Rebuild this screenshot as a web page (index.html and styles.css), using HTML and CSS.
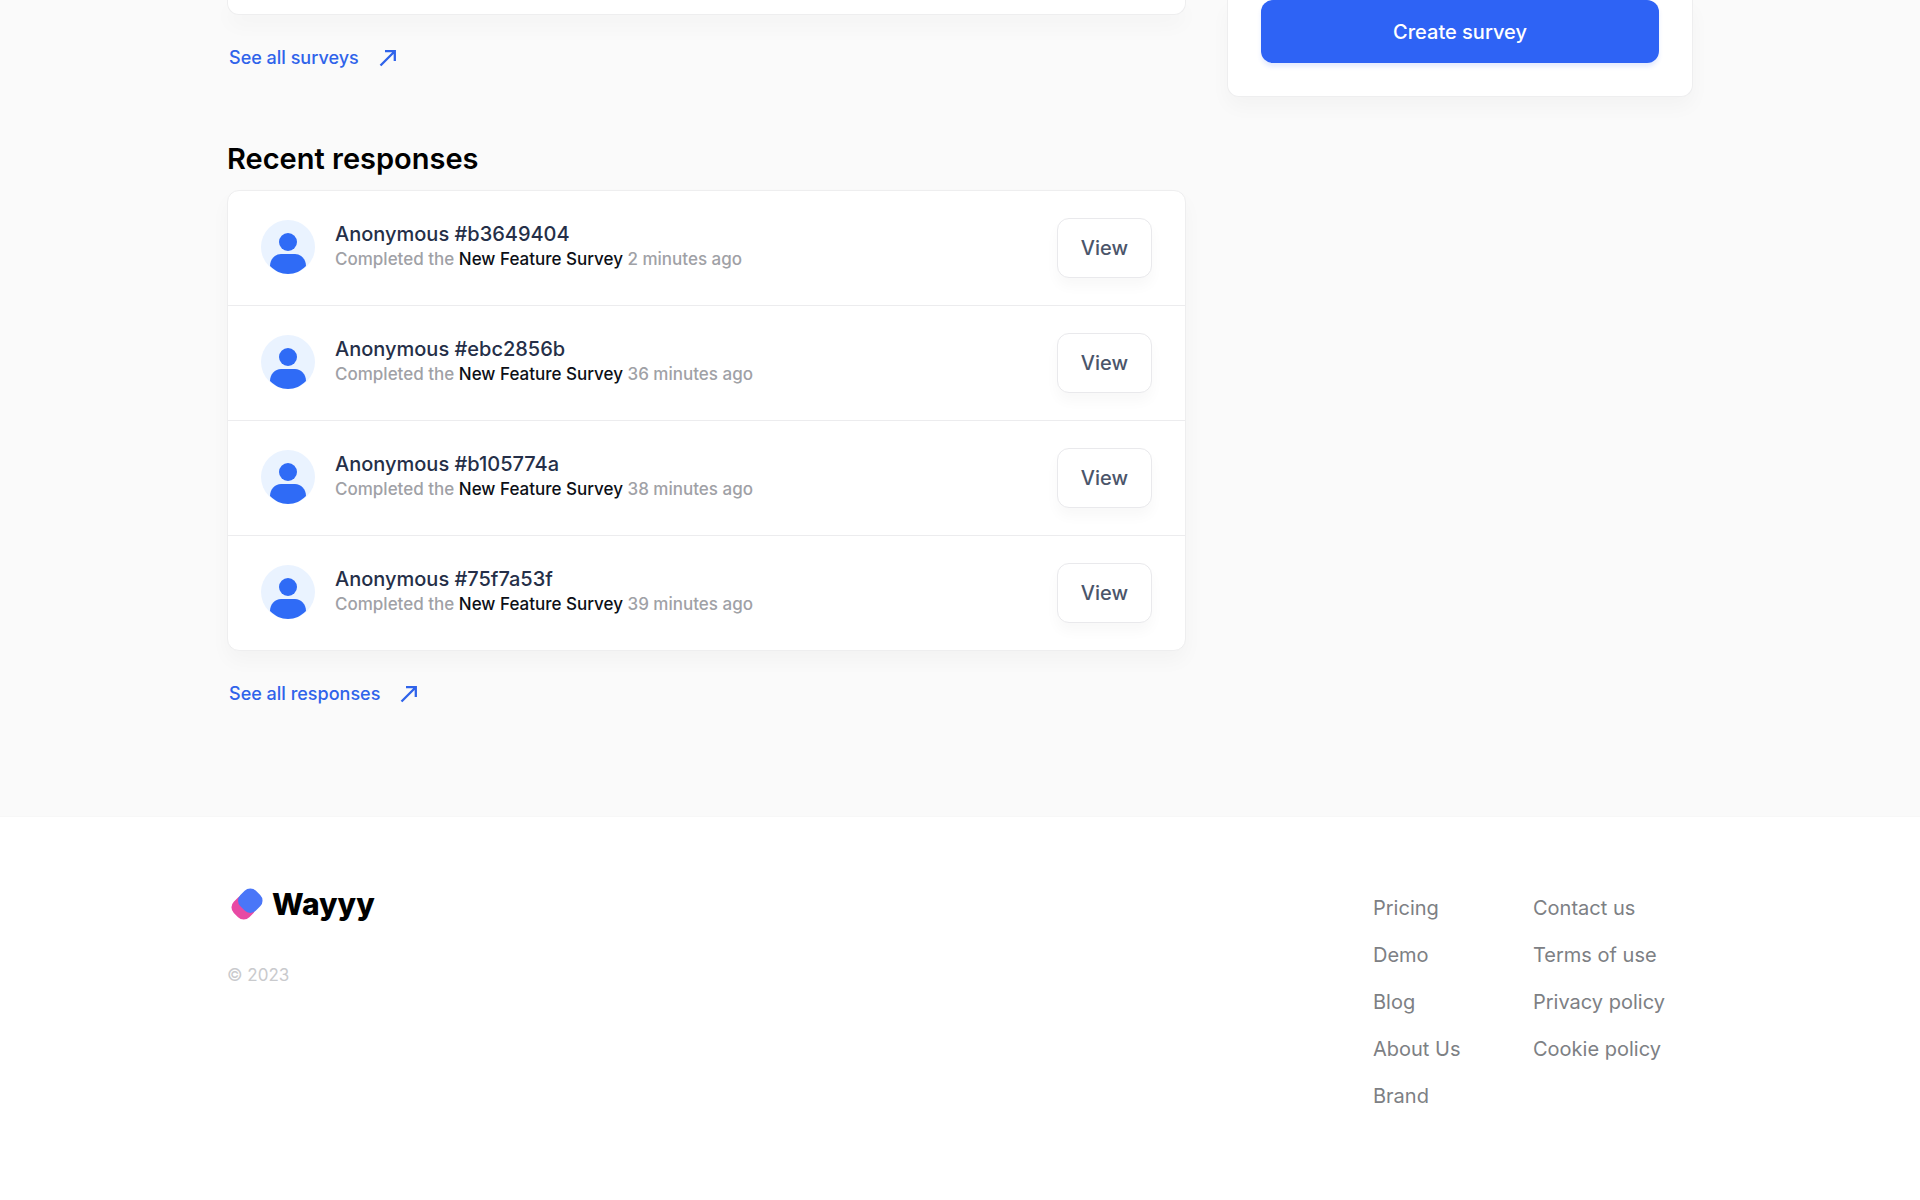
FILE: index.html
```html
<!DOCTYPE html>
<html lang="en">
<head>
    <meta charset="UTF-8">
    <meta name="viewport" content="width=device-width, initial-scale=1.0">
    <title>Wayyy - Dashboard</title>
    <link rel="stylesheet" href="styles.css">
</head>
<body>

<svg class="sprite" aria-hidden="true">
    <symbol id="arrow" viewBox="0 0 18 18">
        <path d="M1.5 16.5L15.5 2.5M6 2.2H15.8V12" fill="none" stroke="currentColor" stroke-width="2.3"/>
    </symbol>
    <symbol id="user" viewBox="0 0 54 54">
        <circle cx="27" cy="27" r="27" fill="#eaf3ff"/>
        <circle cx="27" cy="22" r="9" fill="#2f6bf6"/>
        <path d="M9 46C9 39 14 34 20 34H34C40 34 45 39 45 46C40 51 34 54 27 54S14 51 9 46Z" fill="#2f6bf6"/>
    </symbol>
</svg>

<main class="main">
    <div class="container dashboard">
        <div class="content">
            <section>
                <div class="card card-end"></div>
                <a class="see-all" href="#">See all surveys <svg class="arrow"><use href="#arrow"/></svg></a>
            </section>

            <section class="responses">
                <h2>Recent responses</h2>
                <ul class="card response-list">
                    <li class="response">
                        <svg class="avatar"><use href="#user"/></svg>
                        <div class="details">
                            <h3>Anonymous #b3649404</h3>
                            <p>Completed the <strong>New Feature Survey</strong> 2 minutes ago</p>
                        </div>
                        <button type="button" class="btn btn-view">View</button>
                    </li>
                    <li class="response">
                        <svg class="avatar"><use href="#user"/></svg>
                        <div class="details">
                            <h3>Anonymous #ebc2856b</h3>
                            <p>Completed the <strong>New Feature Survey</strong> 36 minutes ago</p>
                        </div>
                        <button type="button" class="btn btn-view">View</button>
                    </li>
                    <li class="response">
                        <svg class="avatar"><use href="#user"/></svg>
                        <div class="details">
                            <h3>Anonymous #b105774a</h3>
                            <p>Completed the <strong>New Feature Survey</strong> 38 minutes ago</p>
                        </div>
                        <button type="button" class="btn btn-view">View</button>
                    </li>
                    <li class="response">
                        <svg class="avatar"><use href="#user"/></svg>
                        <div class="details">
                            <h3>Anonymous #75f7a53f</h3>
                            <p>Completed the <strong>New Feature Survey</strong> 39 minutes ago</p>
                        </div>
                        <button type="button" class="btn btn-view">View</button>
                    </li>
                </ul>
                <a class="see-all" href="#">See all responses <svg class="arrow"><use href="#arrow"/></svg></a>
            </section>
        </div>

        <aside class="card create">
            <button type="button" class="btn btn-create">Create survey</button>
        </aside>
    </div>
</main>

<footer class="footer">
    <div class="container footer-inner">
        <div>
            <a class="logo" href="#">
                <svg class="logo-mark" viewBox="0 0 32 32">
                    <rect x="1.7" y="8.3" width="22" height="22" rx="8" transform="rotate(45 12.7 19.3)" fill="#e84aa4"/>
                    <rect x="8.3" y="1.7" width="22" height="22" rx="8" transform="rotate(45 19.3 12.7)" fill="#4a76f8"/>
                </svg>
                Wayyy
            </a>
            <p class="copyright">© 2023</p>
        </div>
        <nav class="footer-nav">
            <ul>
                <li><a href="#">Pricing</a></li>
                <li><a href="#">Demo</a></li>
                <li><a href="#">Blog</a></li>
                <li><a href="#">About Us</a></li>
                <li><a href="#">Brand</a></li>
            </ul>
            <ul>
                <li><a href="#">Contact us</a></li>
                <li><a href="#">Terms of use</a></li>
                <li><a href="#">Privacy policy</a></li>
                <li><a href="#">Cookie policy</a></li>
            </ul>
        </nav>
    </div>
</footer>

</body>
</html>
```
FILE: styles.css
```css
* { box-sizing: border-box; }
body { margin: 0; font-family: Inter, sans-serif; background-color: #fff; color: #000; }
h2, h3, p, ul { margin: 0; padding: 0; }
ul { list-style: none; }
a { text-decoration: none; }
.sprite { display: none; }

.container { max-width: 1466px; margin: 0 auto; }
.main { background-color: #fafafa; padding-bottom: 108px; border-bottom: 1px solid #f7f7f7; }
.dashboard { display: grid; grid-template-columns: minmax(0, 1fr) 466px; gap: 41px; align-items: start; }

.card { background-color: #fff; border: 1px solid #eeeeef; border-radius: 12px; box-shadow: 0 10px 20px rgba(0, 0, 0, 0.03); }
.card-end { height: 15px; border-top: none; border-radius: 0 0 12px 12px; }
.see-all { display: flex; align-items: center; gap: 20px; width: fit-content; margin: 29px 0 0 2px; font-size: 18px; line-height: 28px; font-weight: 500; color: #2f63ea; }
.arrow { width: 18px; height: 18px; }

.responses { margin-top: 67px; }
.responses h2 { font-size: 29px; line-height: 40px; font-weight: 600; margin-bottom: 11px; }
.response { display: flex; align-items: center; gap: 20px; padding: 27px 33px; }
.response + .response { border-top: 1px solid #ececee; }
.avatar { width: 54px; height: 54px; flex: none; margin-bottom: 2px; }
.details { flex: 1; padding-bottom: 4px; }
.details h3 { font-size: 20px; line-height: 26px; font-weight: 500; color: #252f48; }
.details p { font-size: 17px; line-height: 24px; font-weight: 500; color: #9fa1a6; }
.details strong { font-weight: 500; color: #0c0f16; }

.btn { font-family: inherit; font-size: 20px; font-weight: 500; border-radius: 12px; cursor: pointer; }
.btn-view { height: 60px; padding: 0 23px; color: #4b556a; background-color: #fff; border: 1px solid #e9e9ec; box-shadow: 0 8px 14px rgba(0, 0, 0, 0.03); }
.create { padding: 0 33px 33px; border-top: none; border-radius: 0 0 12px 12px; }
.btn-create { display: block; width: 100%; height: 63px; color: #fff; background-color: #2e63f5; border: none; box-shadow: 0 4px 4px rgba(46, 99, 245, 0.12); }

.footer { padding: 67px 0 56px; }
.footer-inner { display: flex; justify-content: space-between; }
.logo { display: flex; align-items: center; gap: 9px; margin-left: 4px; font-size: 30px; line-height: 40px; font-weight: 800; color: #000; }
.logo-mark { width: 32px; height: 32px; }
.copyright { margin-top: 39px; font-size: 17px; line-height: 24px; color: #c9cacd; }
.footer-nav { display: grid; grid-template-columns: 160px 160px; padding-top: 1px; }
.footer-nav a { font-size: 20px; line-height: 47px; color: #7d8084; }
```
